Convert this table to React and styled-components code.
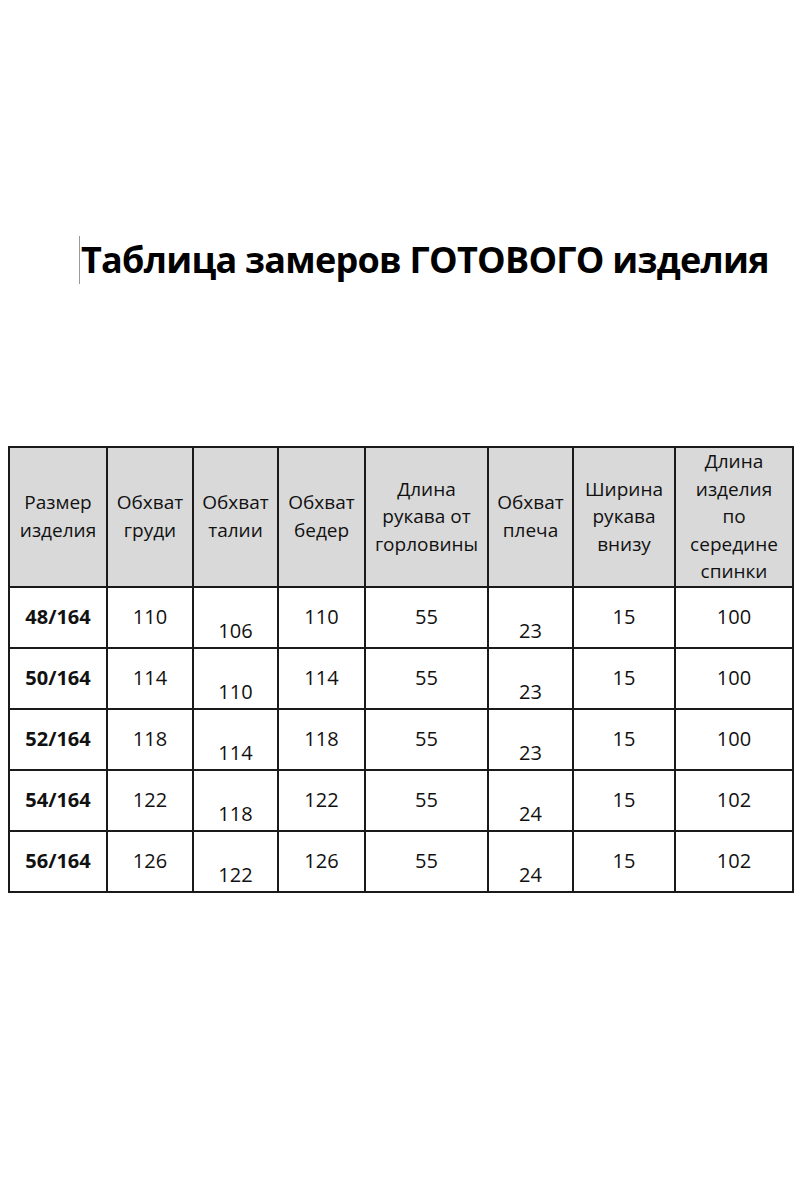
import React from "react";
import styled, { createGlobalStyle } from "styled-components";

const Global = createGlobalStyle`
  html, body { margin: 0; padding: 0; background: #fff; }
  body { font-family: "Open Sans", "Noto Sans", sans-serif; color: #111; }
`;

const Page = styled.div`
  width: 800px;
  height: 1200px;
  background: #fff;
  display: flex;
  flex-direction: column;
  padding-top: 236px;
  box-sizing: border-box;
`;

const TitleRow = styled.div`
  display: flex;
  padding-left: 79px;
  height: 48px;
`;

const Title = styled.h1`
  margin: 0;
  border-left: 1px solid #9a9a9a;
  padding-left: 1px;
  font-size: 36px;
  line-height: 48px;
  font-weight: 700;
  letter-spacing: -0.74px;
  color: #000;
  white-space: nowrap;
`;

const TableWrap = styled.div`
  margin-top: 162px;
  padding-left: 8px;
`;

const Table = styled.table`
  border-collapse: collapse;
  table-layout: fixed;
  width: 784px;
  border: 2px solid #1a1a1a;
`;

const HeadRow = styled.tr`
  height: 139px;
`;

const BodyRow = styled.tr`
  height: 61px;
`;

const Th = styled.th`
  background: #d9d9d9;
  border: 2px solid #1a1a1a;
  padding: 0 2px;
  font-weight: 400;
  font-size: 19px;
  line-height: 27.5px;
  text-align: center;
  vertical-align: middle;
  color: #111;
`;

const Td = styled.td`
  border: 2px solid #1a1a1a;
  padding: ${(p) => (p.$low ? "26px 0 0" : "0 0 2px")};
  font-size: 20px;
  line-height: 27px;
  font-weight: ${(p) => (p.$bold ? 700 : 400)};
  text-align: center;
  vertical-align: middle;
  color: #111;
`;

const cols = [98, 86, 85, 87, 123, 85, 102, 118];

const headers = [
  ["Размер", "изделия"],
  ["Обхват", "груди"],
  ["Обхват", "талии"],
  ["Обхват", "бедер"],
  ["Длина", "рукава от", "горловины"],
  ["Обхват", "плеча"],
  ["Ширина", "рукава", "внизу"],
  ["Длина", "изделия", "по", "середине", "спинки"],
];

const rows = [
  ["48/164", "110", "106", "110", "55", "23", "15", "100"],
  ["50/164", "114", "110", "114", "55", "23", "15", "100"],
  ["52/164", "118", "114", "118", "55", "23", "15", "100"],
  ["54/164", "122", "118", "122", "55", "24", "15", "102"],
  ["56/164", "126", "122", "126", "55", "24", "15", "102"],
];

const lowCols = [2, 5];

export default function App() {
  return (
    <>
      <Global />
      <Page>
        <TitleRow>
          <Title>Таблица замеров ГОТОВОГО изделия</Title>
        </TitleRow>
        <TableWrap>
          <Table>
            <colgroup>
              {cols.map((w, i) => (
                <col key={i} style={{ width: w }} />
              ))}
            </colgroup>
            <thead>
              <HeadRow>
                {headers.map((h, i) => (
                  <Th key={i}>
                    {h.map((l, j) => (
                      <React.Fragment key={j}>
                        {j > 0 && <br />}
                        {l}
                      </React.Fragment>
                    ))}
                  </Th>
                ))}
              </HeadRow>
            </thead>
            <tbody>
              {rows.map((r, i) => (
                <BodyRow key={i}>
                  {r.map((v, j) => (
                    <Td key={j} $bold={j === 0} $low={lowCols.includes(j)}>
                      {v}
                    </Td>
                  ))}
                </BodyRow>
              ))}
            </tbody>
          </Table>
        </TableWrap>
      </Page>
    </>
  );
}
